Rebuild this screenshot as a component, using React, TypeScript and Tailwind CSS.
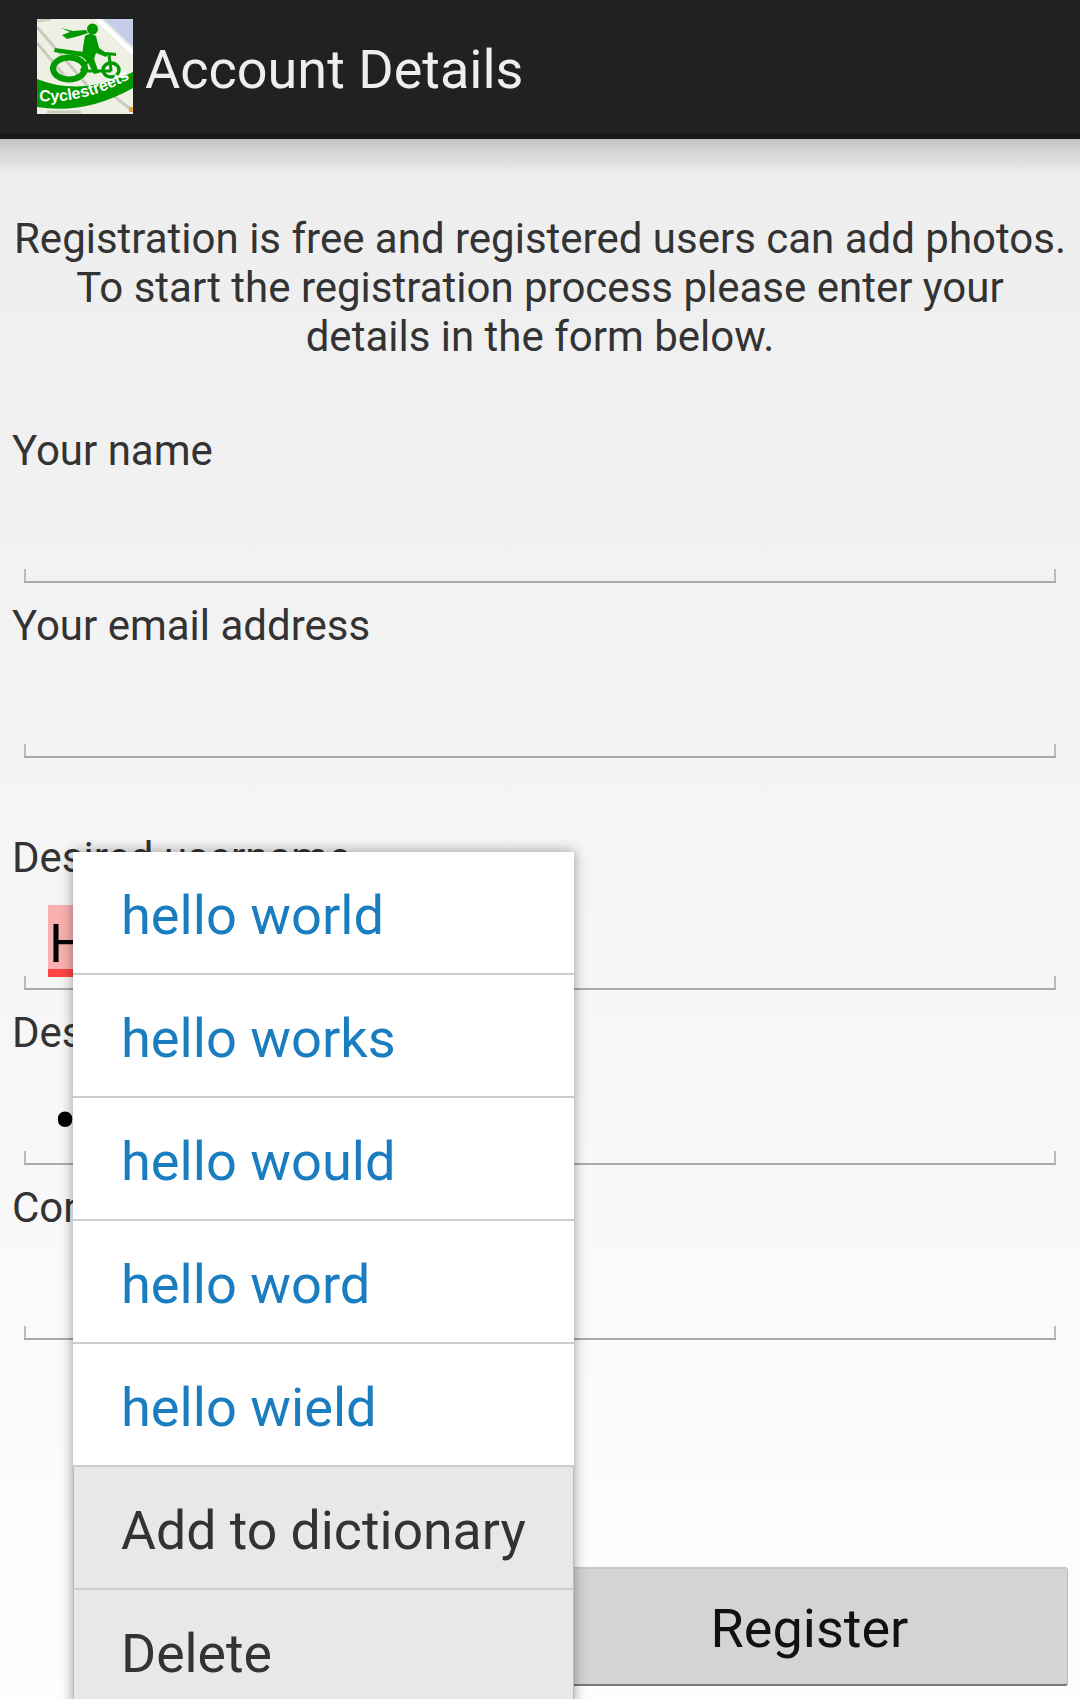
import React from 'react';

const fields = [
	{ label: 'Your name', extra: false },
	{ label: 'Your email address', extra: false },
	{ label: 'Desired username', extra: true, value: 'Hello' },
	{ label: 'Desired password', extra: false, dots: true },
	{ label: 'Confirm password', extra: false },
];

const suggestions = ['hello world', 'hello works', 'hello would', 'hello word', 'hello wield'];

const Logo = () => (
	<svg viewBox="0 0 96 95" className="w-[96px] h-[95px] shrink-0 block">
		<rect width="96" height="95" fill="#eef0e3" />
		{/* map streets */}
		<path d="M66 0 L96 28 L96 0 Z" fill="#c5cde8" />
		<path d="M60 0 L96 34" stroke="#fff" strokeWidth="4" fill="none" />
		<path d="M0 8 L50 66 M0 24 L30 60" stroke="#c6cdbc" strokeWidth="3" fill="none" />
		<path d="M0 2 L14 0 M70 72 L96 92 M10 93 L44 93" stroke="#c9cfc0" strokeWidth="3" fill="none" />
		<rect x="92" y="88" width="4" height="5" fill="#e8a040" />
		{/* scarf and rider */}
		<g fill="#009a00">
			<path d="M24 9 L33 13 L25 16 L30 20 L42 17 L51 14 L49 11 L36 12 Z" />
			<circle cx="55.5" cy="10" r="5.5" />
			<path d="M48 17 Q53 13 59 17 L62 29 L71 35 L69 38 L59 34 L57 40 L62 54 L57 55 L50 42 L45 38 Q46 26 48 17 Z" />
			<path d="M18 29 L47 33 L47 38 L17 33 Z" />
			<path d="M69 33 L79 34 L79 37 L69 36 Z" />
		</g>
		{/* wheels */}
		<ellipse cx="32" cy="49.5" rx="16" ry="11" fill="none" stroke="#009a00" strokeWidth="6" />
		<ellipse cx="74" cy="51" rx="8" ry="7" fill="none" stroke="#009a00" strokeWidth="3.5" />
		<path d="M74 51 L72 36 M44 52 L52 40 M44 52 L74 52" stroke="#009a00" strokeWidth="3" fill="none" />
		<circle cx="74" cy="51" r="1.5" fill="#009a00" />
		{/* banner */}
		<path d="M0 60 Q44 78 96 53 L96 69 Q48 96 0 88 Z" fill="#009a00" />
		<path id="logo-curve" d="M2 82 Q46 86 96 58" fill="none" />
		<text fill="#fff" fontSize="16" fontWeight="700" fontFamily="'Liberation Sans', sans-serif">
			<textPath href="#logo-curve">Cyclestreets</textPath>
		</text>
	</svg>
);

const Field = ({ label, extra, value, dots }: { label: string; extra: boolean; value?: string; dots?: boolean }) => (
	<div className={extra ? 'mt-[74px]' : 'mt-[17px]'}>
		<div className="h-[49px] leading-[51px] pl-[12px] text-[42px] text-[#333]">{label}</div>
		<div className="relative h-[109px] mx-[24px] border-b-2 border-[#aaaaaa]">
			<span className="absolute left-0 bottom-0 w-[2px] h-[12px] bg-[#bbbbbb]" />
			<span className="absolute right-0 bottom-0 w-[2px] h-[12px] bg-[#bbbbbb]" />
			{value && (
				<span className="absolute left-[24px] top-[24px] h-[72px] pl-[1px] pr-[2px] bg-[#f8b0b0] border-b-[8px] border-[#ff4444] text-[54px] leading-[78px] text-black">
					{value}
				</span>
			)}
			{dots && (
				<span className="absolute left-[29px] top-[34px] text-[72px] leading-[64px] text-black">••••••••</span>
			)}
		</div>
	</div>
);

export default function App() {
	return (
		<div className="relative h-[1699px] w-[1080px] overflow-hidden bg-gradient-to-b from-[#ececec] via-[#f3f3f3] via-40% to-[#fefefe] font-[Roboto,sans-serif]">
			<header className="h-[139px] bg-[#212121] border-b-[6px] border-[#1a1a1a] flex items-start pl-[37px] pt-[19px] gap-[12px]">
				<Logo />
				<h1 className="text-[54px] leading-[102px] font-normal text-[#eeeeee]">Account Details</h1>
			</header>
			<div className="h-[34px] -mb-[34px] bg-gradient-to-b from-[#c4c4c4] to-transparent" />

			<p className="pt-[75px] text-center text-[42px] leading-[49px] text-[#333]">
				Registration is free and registered users can add photos.
				<br />
				To start the registration process please enter your
				<br />
				details in the form below.
			</p>

			<form className="mt-[64px]">
				{fields.map((f) => (
					<Field key={f.label} {...f} />
				))}
				<div className="flex justify-end pr-[12px] mt-[227px]">
					<button
						type="button"
						className="w-[516px] h-[119px] pt-[4px] rounded-[3px] bg-[#d4d4d4] border-t-2 border-t-[#c8c8c8] border-b-2 border-b-[#777777] border-r border-r-[#bbbbbb] text-[54px] text-[#111]"
					>
						Register
					</button>
				</div>
			</form>

			{/* spelling popup */}
			<div className="absolute left-[73px] top-[852px] w-[501px] bg-white shadow-[0_0_12px_rgba(0,0,0,0.4)]">
				{suggestions.map((s) => (
					<div
						key={s}
						className="h-[123px] border-b-2 border-[#cccccc] pl-[48px] text-[54.2px] leading-[127px] text-[#1a7dc0]"
					>
						{s}
					</div>
				))}
				{['Add to dictionary', 'Delete'].map((s) => (
					<div
						key={s}
						className="h-[123px] border-b-2 border-[#cccccc] border-x border-x-[#bbbbbb] bg-[#e8e8e8] pl-[47px] text-[53.6px] leading-[128px] text-[#333]"
					>
						{s}
					</div>
				))}
			</div>
		</div>
	);
}
